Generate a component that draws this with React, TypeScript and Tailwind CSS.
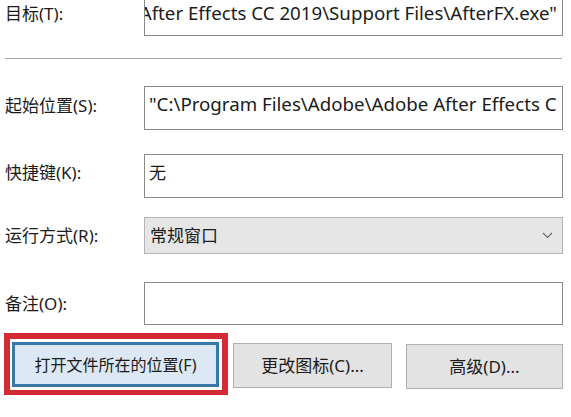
import React from "react";

const font = { fontFamily: '"Noto Sans", "Noto Sans CJK SC", sans-serif' };

function Label({ children, pt }: { children: React.ReactNode; pt: string }) {
  return (
    <div className={`w-[144px] shrink-0 pl-[5px] text-[17px] leading-[24px] text-[#1b1b1b] whitespace-nowrap ${pt}`}>
      {children}
    </div>
  );
}

export default function App() {
  return (
    <div
      className="w-[571px] h-[417px] bg-white overflow-hidden flex flex-col text-[#1b1b1b]"
      style={font}
    >
      {/* Target row */}
      <div className="flex items-start mt-[-4px]">
        <Label pt="pt-[6px]">目标(T):</Label>
        <div className="w-[419px] h-[40px] border border-[#8a8a8a] flex justify-end overflow-hidden pt-[4px] pr-[5px]">
          <span className="whitespace-nowrap text-[18.7px] leading-[24px]">
            After Effects CC 2019\Support Files\AfterFX.exe"
          </span>
        </div>
      </div>

      {/* separator */}
      <div className="mt-[22px] ml-[5px] w-[557px] h-px bg-[#a9a9a9]" />

      {/* Start in */}
      <div className="flex items-start mt-[27px]">
        <Label pt="pt-[8px]">起始位置(S):</Label>
        <div className="w-[419px] h-[44px] border border-[#8a8a8a] overflow-hidden pt-[5px] pl-[4px]">
          <span className="whitespace-nowrap text-[18.7px] leading-[24px]">
            "C:\Program Files\Adobe\Adobe After Effects C
          </span>
        </div>
      </div>

      {/* Shortcut key */}
      <div className="flex items-start mt-[24px]">
        <Label pt="pt-[7px]">快捷键(K):</Label>
        <div className="w-[419px] h-[44px] border border-[#8a8a8a] overflow-hidden pt-[6px] pl-[4px]">
          <span className="whitespace-nowrap text-[17px] leading-[24px]">无</span>
        </div>
      </div>

      {/* Run */}
      <div className="flex items-center mt-[19px]">
        <Label pt="pt-0">运行方式(R):</Label>
        <div className="w-[419px] h-[37px] border border-[#b4b4b4] bg-[#e6e6e6] flex items-center justify-between pl-[5px] pr-[8px]">
          <span className="text-[17px] leading-[24px]">常规窗口</span>
          <svg width="11" height="7" viewBox="0 0 11 7" className="mr-[1px]">
            <path d="M1 1 L5.5 5.5 L10 1" fill="none" stroke="#6b6b6b" strokeWidth="1.2" />
          </svg>
        </div>
      </div>

      {/* Comment */}
      <div className="flex items-center mt-[28px]">
        <Label pt="pt-0">备注(O):</Label>
        <div className="w-[419px] h-[43px] border border-[#8a8a8a]" />
      </div>

      {/* Buttons */}
      <div className="flex items-start mt-[8px] pl-[4px]">
        <div className="w-[224px] h-[62px] border-[6px] border-b-[5px] border-[#d42a33] pt-[3px] pl-[2px] pr-[3px] pb-[3px]">
          <div className="w-full h-full border-[3px] border-[#3a77aa] bg-[#dce8f3] flex items-center justify-center">
            <span className="text-[16px] leading-[24px] text-[#1b1b1b] whitespace-nowrap">打开文件所在的位置(F)</span>
          </div>
        </div>
        <div className="ml-[5px] mt-[10px] w-[159px] h-[45px] border border-[#b0b0b0] bg-[#e3e3e3] flex items-center justify-center">
          <span className="text-[17px] leading-[24px] whitespace-nowrap">更改图标(C)...</span>
        </div>
        <div className="ml-[14px] mt-[11px] w-[157px] h-[45px] border border-[#b0b0b0] bg-[#e3e3e3] flex items-center justify-center">
          <span className="text-[17px] leading-[24px] whitespace-nowrap">高级(D)...</span>
        </div>
      </div>
    </div>
  );
}
